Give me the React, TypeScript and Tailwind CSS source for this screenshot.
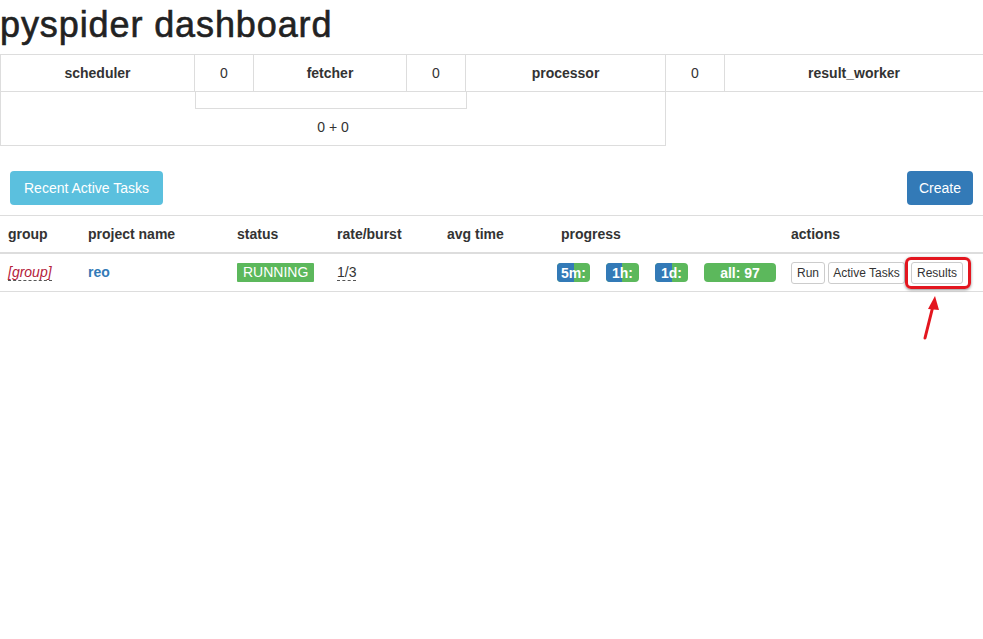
import React from "react";

function Bar({ label, blue, w }: { label: string; blue: number; w: number }) {
  return (
    <div
      className="relative h-[19px] rounded-[4px] bg-[#5cb85c] overflow-hidden mr-[16px] shrink-0"
      style={{ width: w }}
    >
      <div className="h-full bg-[#337ab7]" style={{ width: `${blue}%` }} />
      <span className="absolute inset-0 flex items-center justify-center text-white font-bold text-[14px] leading-none">
        {label}
      </span>
    </div>
  );
}

function XsBtn({ children, w }: { children: React.ReactNode; w: string }) {
  return (
    <button
      className={`h-[22px] ${w} border border-[#ccc] rounded-[3px] bg-white text-[12px] text-[#333] leading-none flex items-center justify-center shrink-0`}
    >
      {children}
    </button>
  );
}

export default function App() {
  const th = "flex items-center justify-center font-bold text-[14px] border-r border-b border-[#ddd] h-[37px]";
  const td = "flex items-center justify-center text-[14px] border-r border-b border-[#ddd] h-[37px]";
  return (
    <div
      className="relative w-[983px] h-[639px] bg-white text-[#333] overflow-hidden"
      style={{ fontFamily: '"Liberation Sans", Arial, sans-serif' }}
    >
      <h1 className="mt-[7px] mb-[11px] h-[36px] text-[36px] leading-none tracking-[0.9px] text-[#222] whitespace-nowrap [-webkit-text-stroke:0.6px_#222]">
        pyspider dashboard
      </h1>

      <div className="grid grid-cols-[194px_59px_153px_59px_200px_59px_258px] border-t border-l border-[#ddd]">
        <div className={th}>scheduler</div>
        <div className={td}>0</div>
        <div className={th}>fetcher</div>
        <div className={td}>0</div>
        <div className={th}>processor</div>
        <div className={td}>0</div>
        <div className="flex items-center justify-center font-bold text-[14px] border-b border-[#ddd] h-[37px]">
          result_worker
        </div>
        <div className="col-span-5 h-[54px] border-r border-b border-[#ddd] flex flex-col">
          <div className="ml-[194px] w-[272px] h-[17px] border-l border-r border-b border-[#ddd]" />
          <div className="flex-1 flex items-center justify-center text-[14px]">0 + 0</div>
        </div>
      </div>

      <div className="mt-[25px] px-[10px] flex justify-between">
        <button className="h-[34px] px-[14px] rounded-[4px] bg-[#5bc0de] text-white text-[14px]">
          Recent Active Tasks
        </button>
        <button className="h-[34px] px-[12px] rounded-[4px] bg-[#337ab7] text-white text-[14px]">
          Create
        </button>
      </div>

      <div className="mt-[10px] border-t border-[#ddd]">
        <div className="grid grid-cols-[80px_149px_100px_110px_114px_230px_200px] h-[38px] border-b-2 border-[#ddd] font-bold text-[14px]">
          <div className="pl-2 flex items-center">group</div>
          <div className="pl-2 flex items-center">project name</div>
          <div className="pl-2 flex items-center">status</div>
          <div className="pl-2 flex items-center">rate/burst</div>
          <div className="pl-2 flex items-center">avg time</div>
          <div className="pl-2 flex items-center">progress</div>
          <div className="pl-2 flex items-center">actions</div>
        </div>
        <div className="grid grid-cols-[80px_149px_100px_110px_114px_230px_200px] h-[38px] border-b border-[#ddd] text-[14px]">
          <div className="pl-2 flex items-center">
            <span className="italic text-[#b5213b] border-b border-dashed border-[#555] leading-[16px]">[group]</span>
          </div>
          <div className="pl-2 flex items-center">
            <span className="font-bold text-[#337ab7]">reo</span>
          </div>
          <div className="pl-2 flex items-center">
            <span className="h-[19px] px-[6px] bg-[#5cb85c] text-white text-[14px] leading-[19px] rounded-[1px]">RUNNING</span>
          </div>
          <div className="pl-2 flex items-center">
            <span className="border-b border-dashed border-[#555] leading-[16px]">1/3</span>
          </div>
          <div />
          <div className="pl-1 flex items-center">
            <Bar label="5m:" blue={50} w={33} />
            <Bar label="1h:" blue={48} w={33} />
            <Bar label="1d:" blue={50} w={33} />
            <Bar label="all: 97" blue={0} w={72} />
          </div>
          <div className="pl-2 flex items-center">
            <XsBtn w="w-[34px]">Run</XsBtn>
            <div className="ml-[3px]">
              <XsBtn w="w-[77px]">Active Tasks</XsBtn>
            </div>
            <div className="flex items-center border-[3px] border-[#e3161f] rounded-[6px] pl-[3px] pr-[5px] py-[2px] shadow-[0_1px_3px_rgba(0,0,0,0.45)]">
              <XsBtn w="w-[52px]">Results</XsBtn>
            </div>
          </div>
        </div>
      </div>

      <svg
        className="absolute left-[915px] top-[292px]"
        width="30"
        height="50"
        viewBox="0 0 30 50"
      >
        <line x1="10" y1="46" x2="18" y2="14" stroke="#e3161f" strokeWidth="3" strokeLinecap="round" />
        <polygon points="20,4 13,17 24,18" fill="#e3161f" />
      </svg>
    </div>
  );
}
